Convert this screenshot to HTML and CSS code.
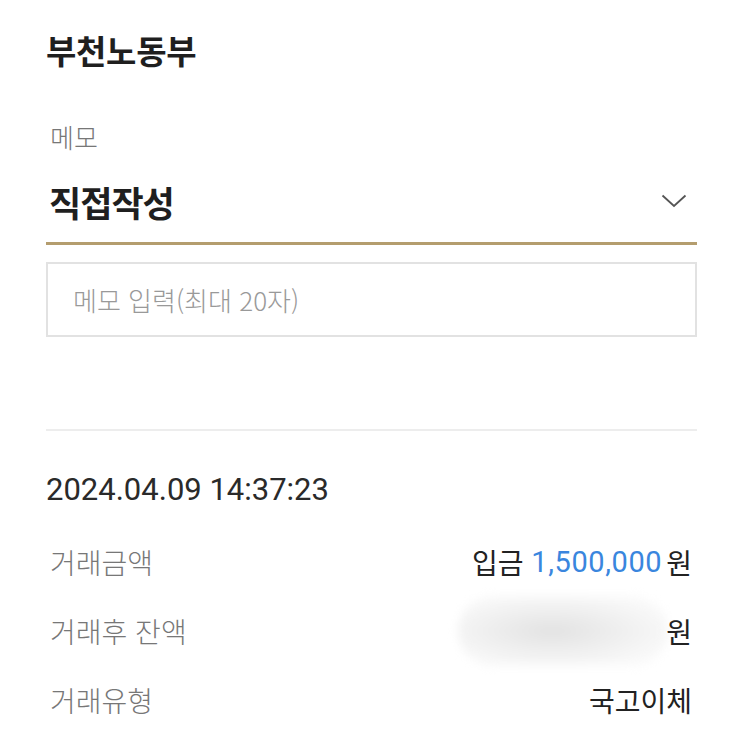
FILE: index.html
```html
<!DOCTYPE html>
<html lang="ko">
<head>
<meta charset="utf-8">
<link rel="stylesheet" href="styles.css">
</head>
<body>
<div class="page">
  <h1 class="title">부천노동부</h1>

  <div class="memo">
    <div class="memo-label">메모</div>
    <div class="select">
      <span class="select-value">직접작성</span>
      <svg class="chevron" width="26" height="14" viewBox="0 0 26 14"><path d="M1.5 1.5 L13 12 L24.5 1.5" fill="none" stroke="#555" stroke-width="1.8"/></svg>
    </div>
    <div class="input">메모 입력(최대 20자)</div>
  </div>

  <div class="divider"></div>

  <div class="datetime">2024.04.09 14:37:23</div>

  <div class="rows">
    <div class="row">
      <span class="label">거래금액</span>
      <span class="value">입금 <span class="amount">1,500,000</span><span class="won">원</span></span>
    </div>
    <div class="row">
      <span class="label">거래후 잔액</span>
      <span class="value"><span class="blur"></span><span class="won">원</span></span>
    </div>
    <div class="row">
      <span class="label">거래유형</span>
      <span class="value">국고이체</span>
    </div>
  </div>
</div>
</body>
</html>
```

FILE: styles.css
```css
* { box-sizing: border-box; }
html, body { margin: 0; padding: 0; background: #fff; }
body {
  font-family: "Noto Sans CJK KR", "Noto Sans", sans-serif;
  color: #222;
}
.page {
  width: 743px;
  padding: 28px 46px 0 46px;
}
.title {
  margin: 0;
  font-size: 33px;
  line-height: 44px;
  font-weight: 700;
  color: #1f1f1f;
  letter-spacing: -0.3px;
}
.memo { margin-top: 47px; }
.memo-label {
  padding-left: 4px;
  font-size: 26px;
  line-height: 36px;
  font-weight: 300;
  color: #777;
}
.select {
  margin-top: 25px;
  height: 65px;
  display: flex;
  align-items: flex-start;
  justify-content: space-between;
  border-bottom: 3px solid #b49d6e;
  padding-left: 3px;
  padding-right: 10px;
}
.select-value {
  font-size: 35px;
  line-height: 44px;
  font-weight: 700;
  color: #1f1f1f;
  letter-spacing: -1px;
}
.chevron { margin-top: 14px; }
.input {
  margin-top: 17px;
  height: 75px;
  border: 2px solid #e2e2e2;
  padding-left: 25px;
  display: flex;
  align-items: center;
  font-size: 26px;
  font-weight: 300;
  color: #999;
}
.divider {
  margin-top: 92px;
  height: 2px;
  background: #ededed;
}
.datetime {
  margin-top: 39px;
  font-family: Roboto, "Noto Sans", sans-serif;
  font-size: 31px;
  line-height: 40px;
  color: #2a2a2a;
}
.rows { margin-top: 17px; }
.row {
  height: 69px;
  display: flex;
  align-items: center;
  justify-content: space-between;
  padding: 0 5px 0 4px;
  font-size: 28px;
}
.label {
  font-weight: 300;
  color: #777;
}
.value {
  color: #222;
  display: flex;
  align-items: center;
  white-space: pre;
}
.amount {
  font-family: Roboto, sans-serif;
  color: #3a86de;
  font-size: 29px;
  letter-spacing: 0.6px;
}
.won { margin-left: 4px; position: relative; }
.blur {
  width: 210px;
  height: 70px;
  margin-right: -6px;
  border-radius: 35px;
  background: radial-gradient(ellipse at 45% 50%, #e2e2e2 0%, #ededed 35%, #f6f6f6 65%, #fcfcfc 90%, #fff 100%);
  filter: blur(5px);
}
```
